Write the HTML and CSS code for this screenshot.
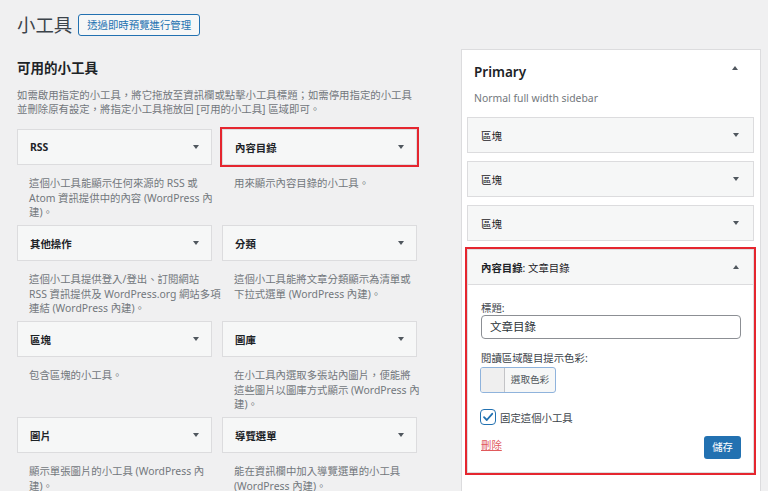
FILE: index.html
```html
<!DOCTYPE html>
<html lang="zh-Hant">
<head>
<meta charset="utf-8">
<title>小工具</title>
<link rel="stylesheet" href="styles.css">
</head>
<body>
<div class="page">
  <header class="top">
    <h1 class="page-title">小工具</h1>
    <a class="btn-outline">透過即時預覽進行管理</a>
  </header>
  <div class="cols">
    <section class="avail">
      <h2 class="avail-title">可用的小工具</h2>
      <p class="avail-desc">如需啟用指定的小工具，將它拖放至資訊欄或點擊小工具標題；如需停用指定的小工具<br>並刪除原有設定，將指定小工具拖放回 [可用的小工具] 區域即可。</p>
      <div class="grid">
        <div class="item">
          <div class="card"><span class="card-title">RSS</span><span class="arrow-down"></span></div>
          <p class="desc">這個小工具能顯示任何來源的 RSS 或<br>Atom 資訊提供中的內容 (WordPress 內<br>建)。</p>
        </div>
        <div class="item">
          <div class="card marked"><span class="card-title">內容目錄</span><span class="arrow-down"></span></div>
          <p class="desc">用來顯示內容目錄的小工具。</p>
        </div>
        <div class="item">
          <div class="card"><span class="card-title">其他操作</span><span class="arrow-down"></span></div>
          <p class="desc">這個小工具提供登入/登出、訂閱網站<br>RSS 資訊提供及 WordPress.org 網站多項<br>連結 (WordPress 內建)。</p>
        </div>
        <div class="item">
          <div class="card"><span class="card-title">分類</span><span class="arrow-down"></span></div>
          <p class="desc">這個小工具能將文章分類顯示為清單或<br>下拉式選單 (WordPress 內建)。</p>
        </div>
        <div class="item">
          <div class="card"><span class="card-title">區塊</span><span class="arrow-down"></span></div>
          <p class="desc">包含區塊的小工具。</p>
        </div>
        <div class="item">
          <div class="card"><span class="card-title">圖庫</span><span class="arrow-down"></span></div>
          <p class="desc">在小工具內選取多張站內圖片，便能將<br>這些圖片以圖庫方式顯示 (WordPress 內<br>建)。</p>
        </div>
        <div class="item">
          <div class="card"><span class="card-title">圖片</span><span class="arrow-down"></span></div>
          <p class="desc">顯示單張圖片的小工具 (WordPress 內<br>建)。</p>
        </div>
        <div class="item">
          <div class="card"><span class="card-title">導覽選單</span><span class="arrow-down"></span></div>
          <p class="desc">能在資訊欄中加入導覽選單的小工具<br>(WordPress 內建)。</p>
        </div>
      </div>
    </section>
    <aside class="sidebar">
      <div class="sb-head">
        <h2 class="sb-title">Primary</h2>
        <span class="arrow-up"></span>
      </div>
      <p class="sb-desc">Normal full width sidebar</p>
      <div class="sb-list">
        <div class="row"><span class="row-title">區塊</span><span class="arrow-down"></span></div>
        <div class="row"><span class="row-title">區塊</span><span class="arrow-down"></span></div>
        <div class="row"><span class="row-title">區塊</span><span class="arrow-down"></span></div>
        <div class="open marked">
          <div class="open-head">
            <span class="row-title"><b>內容目錄</b>: 文章目錄</span>
            <span class="arrow-up"></span>
          </div>
          <div class="open-body">
            <label class="field-label">標題:</label>
            <div class="input">文章目錄</div>
            <label class="field-label gap">閱讀區域醒目提示色彩:</label>
            <div class="color-btn"><span class="swatch"></span><span class="color-text">選取色彩</span></div>
            <div class="check-row">
              <span class="checkbox"><svg width="12" height="12" viewBox="0 0 12 12"><path d="M2 6.2 L4.8 9 L10.2 2.8" fill="none" stroke="#2271b1" stroke-width="1.8" stroke-linecap="round" stroke-linejoin="round"/></svg></span>
              <span class="check-label">固定這個小工具</span>
            </div>
            <div class="actions">
              <a class="delete">刪除</a>
              <span class="save">儲存</span>
            </div>
          </div>
        </div>
      </div>
    </aside>
  </div>
</div>
</body>
</html>
```
FILE: styles.css
```css
* { box-sizing: border-box; }
html, body { margin: 0; padding: 0; }
body {
  background: #f0f0f1;
  font-family: "Noto Sans", "Noto Sans CJK TC", sans-serif;
  color: #1d2327;
  font-size: 10.4px;
  overflow: hidden;
  height: 491px;
}
.page { padding: 13px 0 0 17px; }
.top { display: flex; align-items: center; height: 24px; }
.page-title {
  margin: 0;
  font-size: 18.4px;
  font-weight: 400;
  line-height: 24px;
  color: #3c434a;
}
.btn-outline {
  margin-left: 6px;
  height: 22px;
  line-height: 20px;
  padding: 0 8px;
  border: 1px solid #2271b1;
  border-radius: 3px;
  background: #f6f7f7;
  color: #2271b1;
  font-size: 10.4px;
}
.cols { display: flex; margin-top: 12px; align-items: flex-start; }
.avail { width: 400px; }
.avail-title {
  margin: 10px 0 0;
  font-size: 13.5px;
  line-height: 18px;
  font-weight: 700;
  color: #1d2327;
}
.avail-desc {
  margin: 11px 0 0;
  line-height: 14px;
  color: #72777c;
  white-space: nowrap;
}
.grid {
  margin-top: 13px;
  display: grid;
  grid-template-columns: 195px 195px;
  column-gap: 10px;
  grid-auto-rows: 96px;
}
.card {
  height: 36px;
  border: 1px solid #dcdcde;
  background: #f6f7f7;
  display: flex;
  align-items: center;
  justify-content: space-between;
  padding: 0 12px 0 12px;
}
.card-title { font-weight: 700; color: #1d2327; }
.marked { outline: 2px solid #e5262f; outline-offset: 0px; }
.arrow-down {
  width: 0; height: 0;
  border-left: 3.5px solid transparent;
  border-right: 3.5px solid transparent;
  border-top: 4px solid #50575e;
}
.arrow-up {
  width: 0; height: 0;
  border-left: 3.5px solid transparent;
  border-right: 3.5px solid transparent;
  border-bottom: 4px solid #50575e;
}
.desc {
  margin: 0;
  padding: 11px 0 0 12px;
  line-height: 14.5px;
  color: #72777c;
  white-space: nowrap;
}
.sidebar {
  margin-left: 44px;
  width: 300px;
  height: 460px;
  background: #fff;
  border: 1px solid #dcdcde;
  border-bottom: none;
  padding: 13px 6px 0 5px;
}
.sb-head {
  display: flex;
  justify-content: space-between;
  align-items: center;
  padding: 0 16px 0 7px;
}
.sb-head .arrow-up { margin-top: -8px; }
.sb-title {
  margin: 0;
  font-size: 13.5px;
  line-height: 18px;
  font-weight: 600;
  color: #1d2327;
}
.sb-desc {
  margin: 10px 0 0 7px;
  line-height: 14px;
  color: #72777c;
}
.sb-list {
  margin-top: 12px;
  display: flex;
  flex-direction: column;
  gap: 8px;
}
.row {
  height: 36px;
  border: 1px solid #dcdcde;
  background: #f6f7f7;
  display: flex;
  align-items: center;
  justify-content: space-between;
  padding: 0 14px 0 13px;
}
.row-title { color: #1d2327; }
.row-title b { font-weight: 700; }
.open {
  border: 1px solid #dcdcde;
  background: #fff;
}
.open-head {
  height: 35px;
  background: #f6f7f7;
  border-bottom: 1px solid #dcdcde;
  display: flex;
  align-items: center;
  justify-content: space-between;
  padding: 0 14px 0 13px;
}
.open-body { padding: 16px 12px 13px 13px; }
.field-label { display: block; line-height: 14px; color: #3c434a; }
.field-label.gap { margin-top: 12px; }
.input {
  height: 24px;
  border: 1px solid #8c8f94;
  border-radius: 4px;
  padding: 0 8px;
  font-size: 11.5px;
  line-height: 22px;
  color: #2c3338;
}
.color-btn {
  margin-top: 2px;
  margin-left: -1px;
  width: 76px;
  height: 26px;
  border: 1px solid #8fb3dc;
  border-radius: 3px;
  display: flex;
  overflow: hidden;
  background: #f6f7f7;
}
.swatch { width: 24px; background: #efefef; border-right: 1px solid #c3c4c7; }
.color-text { flex: 1; text-align: center; line-height: 24px; font-size: 9.6px; color: #50575e; }
.check-row { margin-top: 16px; display: flex; align-items: center; margin-left: -1px; }
.checkbox {
  width: 16px; height: 16px;
  border: 1.5px solid #2271b1;
  border-radius: 4px;
  display: flex; align-items: center; justify-content: center;
  background: #fff;
}
.check-label { margin-left: 4px; color: #3c434a; }
.actions {
  margin-top: 11px;
  display: flex;
  justify-content: space-between;
  align-items: center;
}
.delete { color: #e05a5c; text-decoration: underline; margin-top: -7px; }
.save {
  height: 23px;
  line-height: 23px;
  padding: 0 8px;
  background: #2271b1;
  color: #fff;
  border-radius: 3px;
}
```
